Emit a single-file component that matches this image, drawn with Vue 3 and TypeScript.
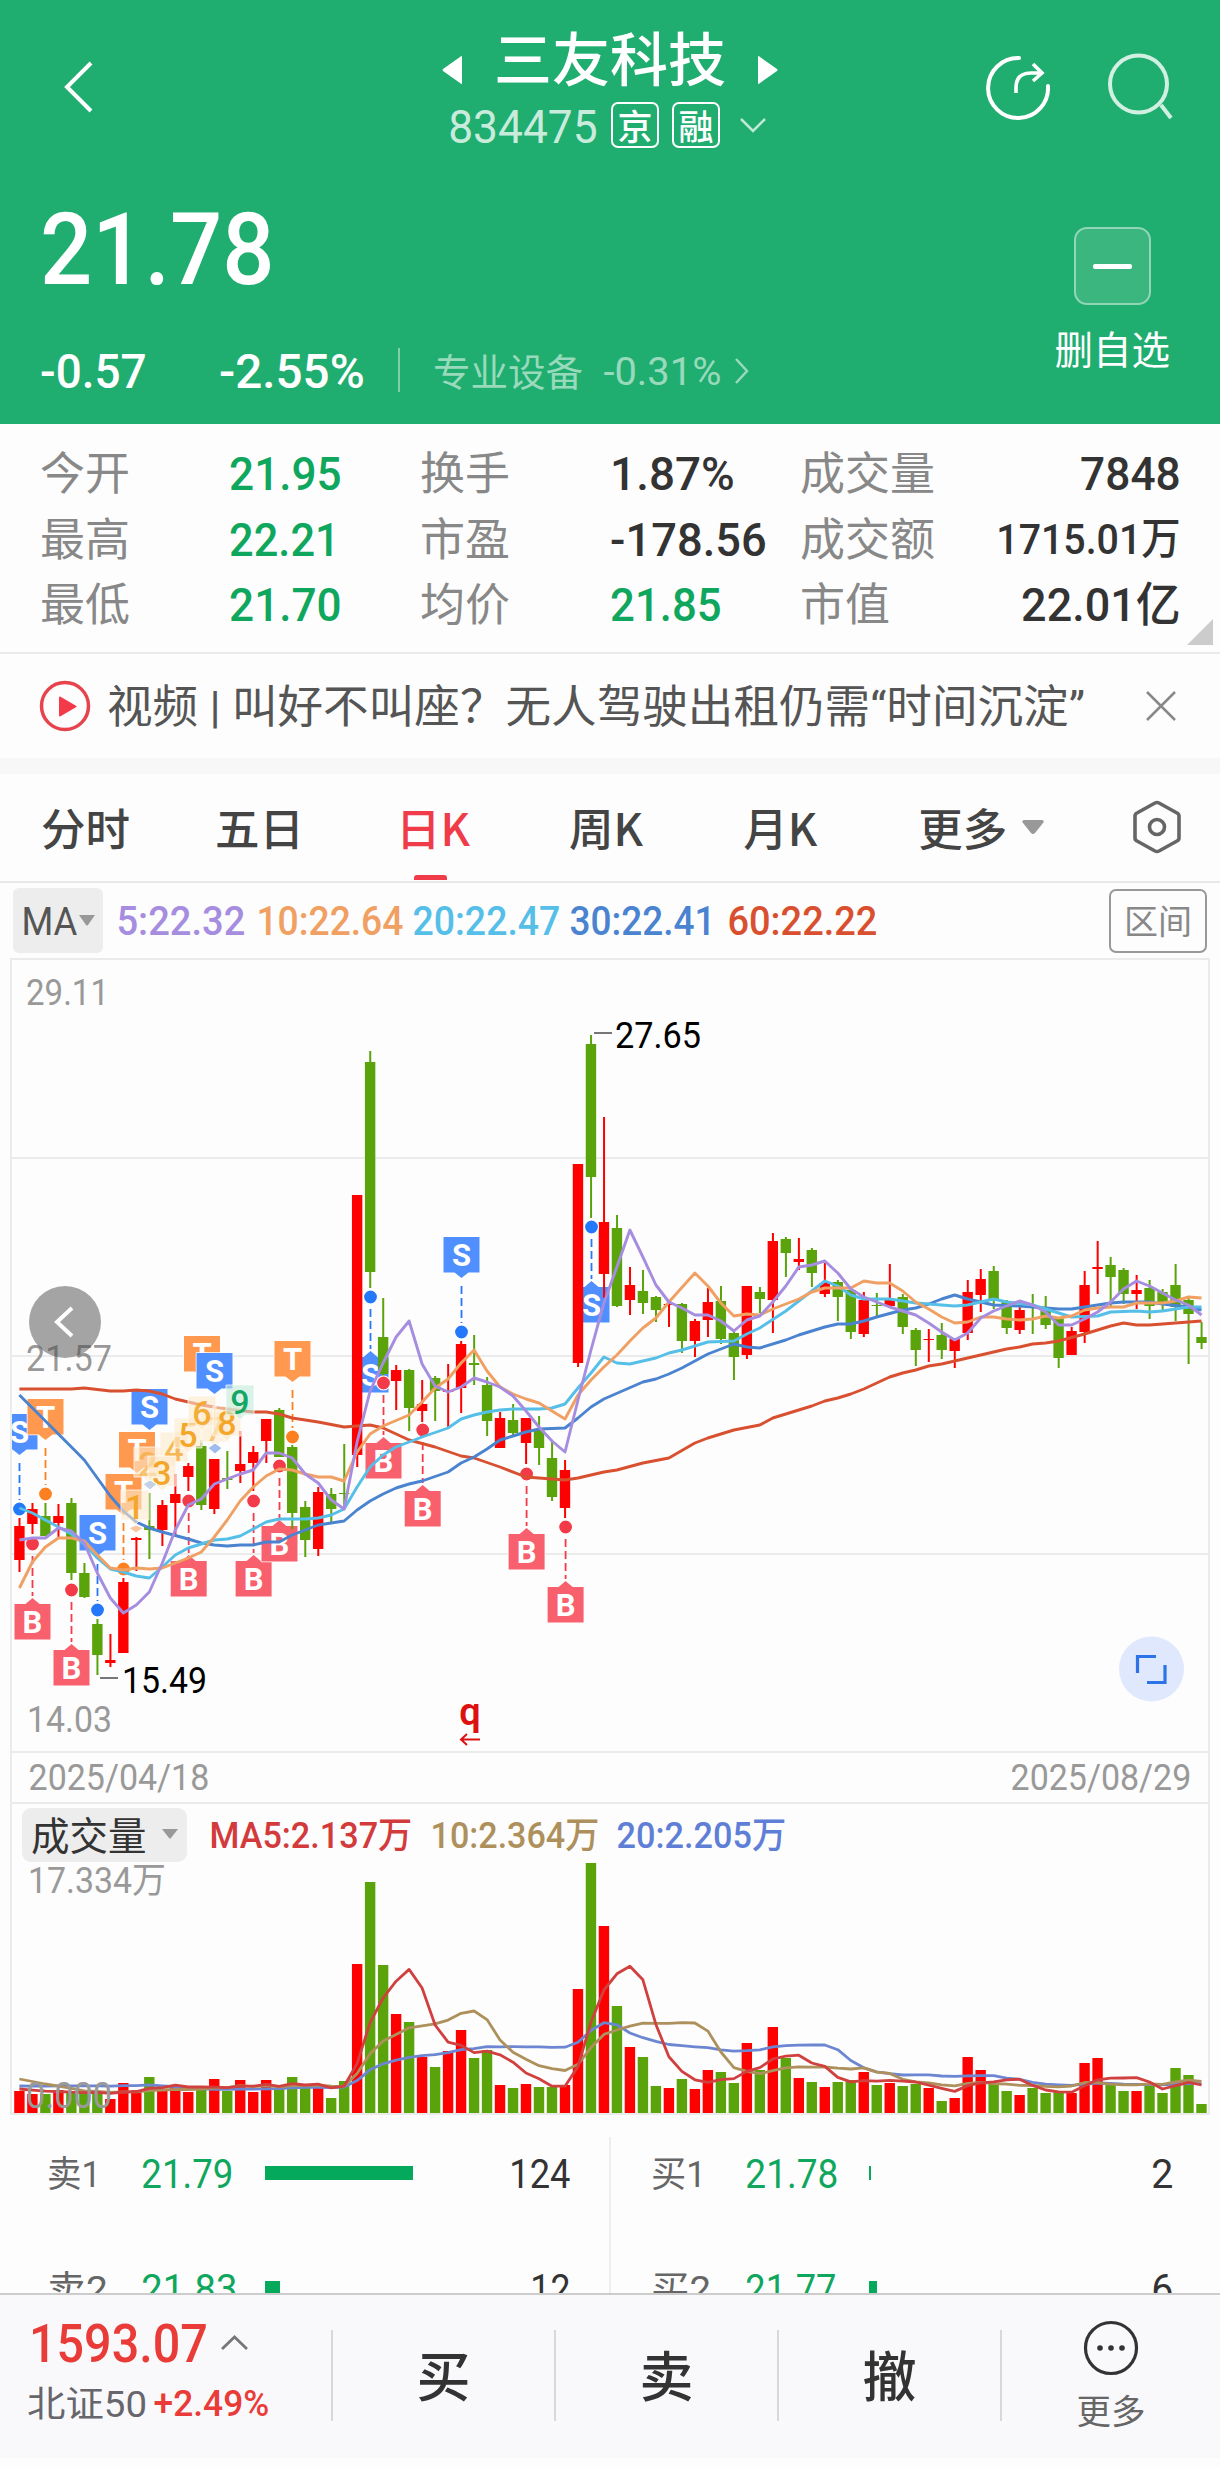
<script setup lang="ts">
import { h } from 'vue'

interface FitProps { t: string; w: number; cap: number; bold?: number }

// Figures drawn to a fixed width; the box is exactly cap height tall.
const Fit = (p: FitProps) => {
  const size = p.cap / 0.711
  return h('svg', { width: p.w, height: p.cap, style: { display: 'block', overflow: 'visible', flex: 'none' } }, [
    h('text', {
      x: -0.04 * size, y: p.cap, 'font-size': size, 'font-weight': p.bold ?? 500, fill: 'currentColor',
      textLength: p.w + 0.075 * size, lengthAdjust: 'spacingAndGlyphs',
    }, p.t),
  ])
}
Fit.props = ['t', 'w', 'cap', 'bold']

const stats = [
  ['今开', '21.95', 109, 'g', '换手', '1.87%', 121, '', '成交量', '7848', 97, 33.5],
  ['最高', '22.21', 107, 'g', '市盈', '-178.56', 153, '', '成交额', '1715.01万', 181, 30.5],
  ['最低', '21.70', 109, 'g', '均价', '21.85', 108, 'g', '市值', '22.01亿', 156, 33.5],
] as const

const maLegend = [
  { t: '5:22.32', w: 126, c: '#a68de0', m: 15 },
  { t: '10:22.64', w: 144, c: '#efa062', m: 14 },
  { t: '20:22.47', w: 145, c: '#55bfe8', m: 12 },
  { t: '30:22.41', w: 143, c: '#4a83d0', m: 12 },
  { t: '60:22.22', w: 147, c: '#d8502f', m: 15 },
]

const X = (i: number) => 19.4 + i * 12.99

// colour, high, body top, body bottom, low, volume top
const raw = `r 1518 1526 1560 1572 2091;r 1503 1509 1524 1534 2094;g 1503 1516 1536 1536 2094;r 1504 1516 1523 1537 2090;g 1498 1503 1573 1580 2092;g 1563 1573 1597 1598 2093;g 1619 1624 1655 1675 2093;r 1634 1660 1663 1667 2099;r 1578 1582 1653 1653 2083;r 1537 1538 1540 1571 2090;g 1493 1526 1530 1559 2077;r 1500 1505 1530 1546 2089;r 1474 1494 1503 1536 2087;r 1463 1466 1477 1491 2092;g 1440 1446 1505 1510 2089;r 1459 1459 1509 1514 2079;g 1451 1478 1480 1489 2091;r 1431 1464 1471 1483 2080;r 1446 1452 1463 1491 2092;r 1419 1419 1441 1463 2080;g 1408 1410 1457 1457 2089;g 1445 1447 1513 1529 2077;g 1501 1507 1540 1557 2087;r 1487 1492 1549 1556 2088;g 1488 1494 1509 1523 2098;g 1444 1493 1494 1508 2081;r 1195 1195 1455 1467 1964;g 1051 1062 1272 1288 1882;g 1298 1337 1374 1382 1965;r 1365 1370 1381 1410 2014;g 1369 1370 1408 1431 2022;r 1380 1404 1411 1422 2057;g 1376 1378 1391 1421 2067;r 1364 1390 1392 1429 2051;r 1341 1344 1388 1413 2030;g 1335 1363 1365 1385 2058;g 1377 1385 1421 1436 2050;r 1412 1418 1448 1448 2085;g 1404 1420 1433 1437 2088;r 1418 1418 1443 1464 2084;g 1416 1430 1448 1465 2087;g 1440 1458 1497 1501 2087;r 1460 1470 1508 1518 2085;r 1164 1164 1363 1367 1989;g 1035 1044 1177 1218 1863;r 1117 1222 1274 1298 1926;g 1215 1228 1306 1307 2006;r 1267 1285 1300 1315 2047;g 1270 1291 1303 1314 2057;g 1296 1297 1310 1322 2086;r 1303 1304 1305 1327 2088;g 1303 1304 1341 1353 2079;r 1319 1321 1341 1357 2089;r 1288 1302 1320 1337 2070;g 1286 1301 1339 1344 2072;g 1332 1333 1357 1380 2083;r 1286 1286 1355 1359 2043;g 1287 1292 1299 1313 2070;r 1233 1241 1300 1333 2027;g 1237 1239 1253 1277 2058;r 1238 1259 1262 1270 2078;g 1248 1250 1273 1287 2082;r 1263 1283 1294 1297 2087;g 1280 1282 1297 1321 2082;g 1287 1290 1332 1339 2080;r 1292 1300 1334 1337 2072;g 1293 1305 1306 1316 2085;r 1264 1300 1306 1306 2083;g 1294 1297 1327 1334 2086;g 1328 1330 1350 1366 2084;r 1329 1339 1340 1362 2088;g 1323 1335 1350 1359 2101;r 1338 1339 1351 1368 2098;r 1280 1292 1333 1340 2057;r 1269 1279 1295 1312 2070;g 1266 1271 1299 1309 2083;g 1300 1302 1328 1334 2091;r 1307 1310 1330 1334 2095;g 1294 1306 1307 1334 2088;g 1296 1311 1325 1329 2093;g 1317 1318 1358 1368 2092;r 1327 1331 1355 1355 2093;r 1271 1285 1332 1343 2063;r 1241 1267 1269 1294 2058;g 1257 1265 1277 1307 2085;g 1268 1270 1294 1304 2091;r 1275 1290 1294 1309 2091;g 1280 1288 1306 1319 2085;g 1289 1292 1302 1310 2093;g 1264 1285 1307 1321 2068;g 1297 1300 1314 1364 2075;g 1322 1337 1343 1349 2104`

const bars = raw.split(';').map((s, i) => {
  const [c, ...n] = s.trim().split(' ')
  const [hi, top, bot, lo, vol] = n.map(Number)
  return { x: X(i), c: c === 'r' ? '#ff0000' : '#5ba30b', hi, top, bot, lo, vol }
})

const toPoints = (s: string) => s.split(' ').map((p) => {
  const [i, y] = p.split(':').map(Number)
  return `${X(i).toFixed(1)},${y}`
}).join(' ')

const maLines = [
  { c: '#d8502f', p: toPoints('0:1389 4:1389 5:1388 7:1391 8:1391 9:1390 10:1391 11:1394 12:1399 13:1402 14:1405 16:1409 18:1412 19:1412 20:1414 21:1418 23:1422 25:1427 27:1425 28:1428 30:1440 32:1447 34:1456 35:1458 37:1467 39:1477 42:1480 43:1478 45:1472 46:1470 48:1463 50:1458 52:1443 53:1438 55:1430 57:1425 58:1418 59:1414 61:1406 62:1401 63:1398 64:1394 65:1389 67:1377 68:1373 69:1370 70:1366 71:1364 73:1358 76:1349 77:1347 78:1344 79:1343 80:1341 82:1334 84:1326 85:1323 86:1325 87:1325 90:1322 91:1321') },
  { c: '#4a83d0', p: toPoints('0:1395 4:1447 5:1460 7:1496 8:1511 9:1522 10:1528 11:1532 13:1539 14:1543 15:1545 16:1546 17:1545 18:1545 19:1542 20:1542 21:1535 22:1530 23:1525 24:1523 25:1521 26:1510 27:1501 28:1494 29:1488 30:1484 31:1481 33:1472 34:1463 35:1457 36:1449 37:1440 38:1436 39:1432 40:1429 42:1428 43:1418 44:1407 45:1399 48:1382 49:1379 50:1374 51:1368 52:1361 53:1354 55:1344 56:1347 57:1348 59:1340 60:1335 62:1327 63:1324 64:1324 65:1321 66:1317 68:1310 69:1308 70:1304 71:1299 72:1295 73:1299 75:1305 77:1306 78:1307 80:1309 81:1309 83:1305 84:1303 85:1302 87:1302 88:1304 90:1307 91:1310') },
  { c: '#55bfe8', p: toPoints('0:1508 1:1513 2:1520 3:1527 4:1534 5:1544 6:1558 7:1569 8:1572 9:1576 10:1578 11:1567 12:1555 13:1548 14:1544 15:1540 16:1539 17:1536 18:1529 19:1522 20:1519 22:1519 23:1518 24:1515 25:1509 26:1487 27:1467 28:1455 29:1447 30:1442 31:1437 33:1428 34:1419 35:1415 36:1412 37:1410 38:1409 40:1409 41:1408 42:1404 43:1388 44:1373 45:1357 46:1363 47:1364 49:1358 50:1353 51:1350 53:1342 55:1341 56:1334 57:1328 59:1311 61:1291 62:1281 63:1286 64:1295 65:1299 67:1299 69:1303 72:1306 73:1305 75:1299 76:1302 78:1305 79:1309 80:1313 81:1317 83:1316 84:1312 86:1311 87:1312 88:1311 89:1309 90:1307 91:1307') },
  { c: '#efa062', p: toPoints('0:1588 1:1562 2:1547 3:1538 4:1538 5:1541 6:1555 7:1568 8:1570 9:1568 10:1569 11:1568 12:1563 13:1558 14:1552 15:1537 16:1520 17:1501 18:1487 19:1476 20:1469 21:1470 22:1474 23:1477 24:1477 25:1481 26:1452 27:1434 28:1426 30:1415 31:1402 32:1388 33:1379 34:1363 35:1350 36:1371 37:1387 38:1394 39:1399 40:1403 41:1411 42:1419 43:1395 44:1380 45:1367 46:1355 47:1341 48:1328 49:1318 50:1302 52:1273 53:1286 54:1303 55:1316 56:1314 57:1315 58:1309 60:1299 61:1292 62:1288 64:1288 65:1281 66:1283 67:1283 68:1291 69:1302 70:1309 71:1317 72:1323 73:1322 74:1317 75:1317 76:1319 77:1320 78:1319 79:1316 80:1318 81:1316 82:1310 83:1308 84:1307 85:1307 86:1303 88:1303 89:1301 90:1297 91:1298') },
  { c: '#a68de0', p: toPoints('0:1540 1:1538 2:1538 3:1528 4:1531 5:1543 6:1573 7:1598 8:1613 9:1605 10:1592 11:1563 12:1530 13:1505 14:1499 15:1484 16:1479 17:1474 18:1470 19:1453 20:1453 21:1458 22:1474 23:1483 24:1500 25:1509 26:1442 27:1391 28:1363 29:1337 30:1321 31:1364 32:1386 33:1392 34:1387 35:1378 36:1382 37:1387 38:1396 39:1411 40:1427 41:1441 42:1452 43:1400 44:1350 45:1303 46:1267 47:1230 48:1257 49:1285 50:1302 51:1308 52:1315 53:1315 54:1321 55:1331 56:1320 57:1316 58:1302 59:1286 60:1267 61:1265 62:1261 63:1273 64:1289 65:1297 66:1302 67:1307 69:1315 70:1323 71:1332 72:1340 73:1333 74:1318 75:1311 76:1306 77:1301 78:1305 79:1312 80:1325 81:1325 82:1319 83:1312 84:1302 85:1289 86:1281 87:1286 88:1293 89:1300 90:1305 91:1315') },
]

// Volumes that precede the visible window, oldest first.
const before = [...Array(10).fill(20), ...Array(5).fill(44), ...Array(4).fill(24.5)] as number[]
const volumes = [...before, ...bars.map((b) => 2113 - b.vol)]
const average = (n: number) => bars.map((b, i) => {
  const end = i + before.length + 1
  const sum = volumes.slice(end - n, end).reduce((a, v) => a + v, 0)
  return `${b.x.toFixed(1)},${(2113 - sum / n).toFixed(1)}`
}).join(' ')
const volLines = [
  { c: '#6c86d2', p: average(20) },
  { c: '#ad905c', p: average(10) },
  { c: '#d0403f', p: average(5) },
]

interface Signal { k: 'S' | 'T' | 'B'; x: number; y: number; dot?: number; up?: boolean }
const signals: Signal[] = [
  { k: 'S', x: 19.5, y: 1414, dot: 1509 },
  { k: 'T', x: 45.5, y: 1399, dot: 1494 },
  { k: 'T', x: 137, y: 1432 },
  { k: 'T', x: 123.5, y: 1474, dot: 1569 },
  { k: 'S', x: 149.5, y: 1389 },
  { k: 'S', x: 97.5, y: 1515, dot: 1610 },
  { k: 'T', x: 202, y: 1336 },
  { k: 'S', x: 214.5, y: 1353 },
  { k: 'T', x: 292.5, y: 1341, dot: 1437 },
  { k: 'S', x: 370.5, y: 1357, dot: 1297, up: true },
  { k: 'S', x: 461.5, y: 1237, dot: 1332 },
  { k: 'S', x: 591.5, y: 1287, dot: 1227, up: true },
  { k: 'B', x: 32.5, y: 1604, dot: 1544, up: true },
  { k: 'B', x: 71.5, y: 1650, dot: 1590, up: true },
  { k: 'B', x: 188.7, y: 1561, dot: 1501, up: true },
  { k: 'B', x: 253.6, y: 1561, dot: 1501, up: true },
  { k: 'B', x: 279.5, y: 1526, dot: 1466, up: true },
  { k: 'B', x: 383.5, y: 1443, dot: 1383, up: true },
  { k: 'B', x: 422.7, y: 1491, dot: 1430, up: true },
  { k: 'B', x: 526.6, y: 1534, dot: 1474, up: true },
  { k: 'B', x: 565.6, y: 1587, dot: 1527, up: true },
]
const boxColor = { S: '#508fff', T: '#ff994f', B: '#f7606c' }
const dotColor = { S: '#2478fa', T: '#fd8020', B: '#f33a48' }
const boxPath = (s: Signal) => s.up
  ? `M${s.x - 18} ${s.y}H${s.x - 7}L${s.x} ${s.y - 6}L${s.x + 7} ${s.y}H${s.x + 18}V${s.y + 35.5}H${s.x - 18}Z`
  : `M${s.x - 18} ${s.y}H${s.x + 18}V${s.y + 35.5}H${s.x + 7}L${s.x} ${s.y + 41}L${s.x - 7} ${s.y + 35.5}H${s.x - 18}Z`

const counts = [
  { n: '1', x: 135, y: 1508, o: 1 }, { n: '2', x: 148, y: 1465, o: 0.6 }, { n: '4', x: 174, y: 1450, o: 0.75 },
  { n: '3', x: 162, y: 1474, o: 1 }, { n: '5', x: 188, y: 1436, o: 1 }, { n: '7', x: 215, y: 1430, o: 0.55 },
  { n: '6', x: 202, y: 1414, o: 0.9 }, { n: '8', x: 227, y: 1424, o: 1 }, { n: '9', x: 240, y: 1403, o: 1 },
]

const book = [
  [{ n: '卖1', nw: 51, p: '21.79', pw: 89, bar: 148, q: '124', qw: 58 }, { n: '买1', nw: 52, p: '21.78', pw: 90, bar: 2, q: '2', qw: 19 }],
  [{ n: '卖2', nw: 58, p: '21.83', pw: 93, bar: 15, q: '12', qw: 37 }, { n: '买2', nw: 57, p: '21.77', pw: 88, bar: 8, q: '6', qw: 19 }],
]
</script>

<template>
  <div class="app">
    <header class="head">
      <div class="nav">
        <svg class="back" width="30" height="54" viewBox="0 0 30 54"><path d="M27 3 3 27l24 24" fill="none" stroke="#fff" stroke-width="4" /></svg>
        <div class="title">
          <div class="name">
            <svg width="20" height="28"><path d="M20 1v26q0 2-2 0L1 15q-1-1 0-2L18 1q2-2 2 0z" fill="#fff" /></svg>
            <span>三友科技</span>
            <svg width="20" height="28"><path d="M0 1v26q0 2 2 0L19 15q1-1 0-2L2 1Q0-1 0 1z" fill="#fff" /></svg>
          </div>
          <div class="code">
            <Fit t="834475" :w="146" :cap="33" :bold="400" class="dim" />
            <i>京</i><i>融</i>
            <svg class="down" width="26" height="16"><path d="m1 2 12 12L25 2" fill="none" stroke="#bfe8d5" stroke-width="2.5" /></svg>
          </div>
        </div>
        <svg class="share" width="68" height="68" viewBox="984 54 68 68" fill="none" stroke="#fff" stroke-width="4">
          <path d="M1019 58A30 30 0 1 0 1048 86" stroke-linecap="round" />
          <path d="M1016 93V88Q1016 73 1031 73H1042M1033 64l9 9-9 8" stroke-width="3.6" />
        </svg>
        <svg class="search" width="68" height="68" viewBox="1106 52 68 68" fill="none" stroke="#d2f0e2" stroke-width="4">
          <circle cx="1138.500" cy="84" r="28.500" /><path d="m1161 105 10 13" />
        </svg>
      </div>
      <div class="quote">
        <div>
          <Fit t="21.78" :w="227" :cap="71" />
          <div class="change">
            <Fit t="-0.57" :w="103" :cap="34" />
            <Fit t="-2.55%" :w="142" :cap="34" style="margin-left: 76px" />
            <b class="sep" />
            <span class="sector">专业设备</span>
            <Fit t="-0.31%" :w="115" :cap="27.500" :bold="400" class="soft" />
            <svg class="soft go" width="14" height="26"><path d="m2 1 11 12L2 25" fill="none" stroke="currentColor" stroke-width="2.5" /></svg>
          </div>
        </div>
        <div class="remove">
          <div class="minus"><b /></div>
          <span>删自选</span>
        </div>
      </div>
    </header>

    <section class="stats">
      <div v-for="r in stats" :key="r[0]" class="stat">
        <span>{{ r[0] }}</span><Fit :t="r[1]" :w="r[2]" :cap="33.500" :class="r[3]" />
        <span>{{ r[4] }}</span><Fit :t="r[5]" :w="r[6]" :cap="33.500" :class="r[7]" />
        <span>{{ r[8] }}</span><Fit :t="r[9]" :w="r[10]" :cap="r[11]" class="end" />
      </div>
      <svg class="fold" width="26" height="26"><path d="M26 0v26H0z" fill="#ccc" /></svg>
    </section>

    <section class="news">
      <svg width="52" height="52" viewBox="0 0 52 52"><circle cx="26" cy="26" r="23.500" fill="none" stroke="#e7434d" stroke-width="3.500" /><path d="M21 17.500v18L36.500 26.500z" fill="#f33a48" stroke="#f33a48" stroke-width="2" stroke-linejoin="round" /></svg>
      <svg class="headline" width="974" height="46"><text x="-2" y="40" textLength="978" lengthAdjust="spacingAndGlyphs">视频 | 叫好不叫座？无人驾驶出租仍需“时间沉淀”</text></svg>
      <svg class="close" width="30" height="30"><path d="m1 1 28 28M29 1 1 29" stroke="#888" stroke-width="2.500" /></svg>
    </section>

    <nav class="tabs">
      <span style="margin-left: 41px">分时</span>
      <span style="margin-left: 85px">五日</span>
      <span class="on" style="margin-left: 92px">日K</span>
      <span style="margin-left: 99px">周K</span>
      <span style="margin-left: 100px">月K</span>
      <span style="margin-left: 101px">更多</span>
      <svg style="margin-left: 15px" width="22" height="14"><path d="M2 0h18q3 1 1 3L13 13q-2 2-4 0L1 3Q-1 1 2 0z" fill="#999" /></svg>
      <svg style="margin-left: 88px" width="50" height="54" viewBox="-25 -27 50 54" fill="none" stroke="#666" stroke-width="3.600"><path d="M-2-24q2-1 4 0L20-14q2 1 2 3V11q0 2-2 3L2 24q-2 1-4 0L-20 14q-2-1-2-3V-11q0-2 2-3z" /><circle r="7.500" /></svg>
    </nav>

    <div class="legend">
      <div class="chip">
        <Fit t="MA" :w="53" :cap="28" :bold="400" />
        <svg width="16" height="11"><path d="M0 0h16L9 10q-1 1-2 0z" fill="#999" /></svg>
      </div>
      <Fit v-for="m in maLegend" :key="m.t" :t="m.t" :w="m.w" :cap="28.500" :style="{ color: m.c, marginLeft: m.m + 'px' }" />
      <div class="range">区间</div>
    </div>

    <div class="frame">
      <svg class="plot" width="1196" height="791" viewBox="12 960 1196 791">
        <g stroke="#ebebeb" stroke-width="2"><path d="M11 1158H1210M11 1356H1210M11 1554H1210" /></g>
        <g v-for="(s, i) in signals" :key="'b' + i">
          <path v-if="s.dot" :d="s.up ? `M${s.x} ${s.dot + 12}V${s.y - 8}` : `M${s.x} ${s.y + 49}V${s.dot - 9}`" :stroke="dotColor[s.k]" stroke-width="1.800" stroke-dasharray="8 4" />
          <path :d="boxPath(s)" :fill="boxColor[s.k]" stroke="#fff" stroke-width="1.500" paint-order="stroke" stroke-linejoin="round" />
          <text :x="s.x" :y="s.y + 29" class="mark">{{ s.k }}</text>
        </g>
        <g v-for="(b, i) in bars" :key="i" :fill="b.c">
          <rect :x="b.x - 0.900" :y="b.hi" width="2" :height="b.lo - b.hi" />
          <rect :x="b.x - 5.200" :y="b.top" width="10.400" :height="b.bot - b.top" />
        </g>
        <template v-for="(s, i) in signals" :key="'d' + i">
          <circle v-if="s.dot" :cx="s.x" :cy="s.dot" r="7" :fill="dotColor[s.k]" stroke="#fff" stroke-width="1.200" />
        </template>
        <polyline v-for="m in maLines" :key="m.c" :points="m.p" :stroke="m.c" fill="none" stroke-width="2.900" stroke-linejoin="round" />
        <g v-for="c in counts" :key="c.n">
          <path :d="`M${c.x - 14} ${c.y - 18}h28v30h-9l-5 5-5-5h-9z`" :fill="c.n === '9' ? '#c4ebdb' : '#fdeacb'" fill-opacity=".6" stroke="#fff" stroke-opacity=".7" />
          <text :x="c.x" :y="c.y + 11" class="count" :fill="c.n === '9' ? '#14a764' : '#f3a628'" :opacity="c.o">{{ c.n }}</text>
        </g>
        <g fill="#fff" stroke="#fff"><path d="M129 1528l7 5 7-5-7-3z" fill="#f9c6a0" /><path d="M143 1484l7 6 7-6-7-4z" fill="#c5d2e6" /><path d="M208 1448l7 6 7-6-7-5z" fill="#9fbdec" /></g>
        <g fill="#999" font-size="36.500">
          <text x="26" y="1005" textLength="83" lengthAdjust="spacingAndGlyphs">29.11</text>
          <text x="27" y="1732" textLength="85" lengthAdjust="spacingAndGlyphs">14.03</text>
          <circle cx="65" cy="1322" r="36" fill="#a4a4a4" />
          <text x="26" y="1371" textLength="86" lengthAdjust="spacingAndGlyphs" fill="#4a4a4a" fill-opacity=".58">21.57</text>
        </g>
        <path d="m72 1308-15 14 15 14" fill="none" stroke="#fff" stroke-width="4" />
        <path d="M594 1033h18M100 1678h18" stroke="#777" stroke-width="2" />
        <g fill="#000" font-size="36.500">
          <text x="615" y="1048" textLength="86" lengthAdjust="spacingAndGlyphs">27.65</text>
          <text x="122" y="1693" textLength="85" lengthAdjust="spacingAndGlyphs">15.49</text>
        </g>
        <text x="470" y="1725" class="event">q</text>
        <path d="M480 1739.500H461M467 1734l-6 5.500 6 5.500" fill="none" stroke="#dd1111" stroke-width="2" />
        <circle cx="1151.500" cy="1669" r="32.500" fill="#dfe8fc" />
        <path d="M1137.500 1673V1656.500H1156M1165 1665V1682.500H1147" fill="none" stroke="#2c73e8" stroke-width="3.200" />
      </svg>
      <div class="dates">
        <Fit t="2025/04/18" :w="178" :cap="26" :bold="400" />
        <Fit t="2025/08/29" :w="178" :cap="26" :bold="400" />
      </div>
      <div class="vol-legend">
        <div class="vol-chip">成交量<svg width="16" height="10"><path d="M0 0h16L9 9q-1 1-2 0z" fill="#999" /></svg></div>
        <Fit t="MA5:2.137万" :w="200" :cap="26" style="color: #d33a3c; margin-left: 24px" />
        <Fit t="10:2.364万" :w="166" :cap="26" style="color: #ad905c; margin-left: 21px" />
        <Fit t="20:2.205万" :w="167" :cap="26" style="color: #5f7fd6; margin-left: 20px" />
      </div>
      <svg class="plot" width="1196" height="250" viewBox="12 1863 1196 250">
        <rect v-for="(b, i) in bars" :key="i" :x="b.x - 5.200" :y="b.vol" width="10.400" :height="2113 - b.vol" :fill="b.c" />
        <polyline v-for="m in volLines" :key="m.c" :points="m.p" :stroke="m.c" fill="none" stroke-width="2.800" stroke-linejoin="round" />
        <g fill="#999" font-size="36.500">
          <text x="28" y="1893" textLength="138" lengthAdjust="spacingAndGlyphs">17.334万</text>
          <text x="26" y="2108" textLength="86" lengthAdjust="spacingAndGlyphs">0.000</text>
        </g>
      </svg>
    </div>

    <section class="book">
      <div v-for="(row, i) in book" :key="i" class="level">
        <div v-for="o in row" :key="o.n" class="order">
          <svg class="side" width="95" height="36"><text x="-1" y="32" :textLength="o.nw + 3" lengthAdjust="spacingAndGlyphs">{{ o.n }}</text></svg>
          <div class="price"><Fit :t="o.p" :w="o.pw" :cap="29.500" :bold="400" /></div>
          <b :style="{ width: o.bar + 'px' }" />
          <Fit :t="o.q" :w="o.qw" :cap="29.500" :bold="400" class="end" />
        </div>
      </div>
    </section>

    <footer class="bar">
      <div class="index">
        <div class="point"><Fit t="1593.07" :w="175" :cap="37.500" /><svg width="27" height="16"><path d="m1 14 12.500-12L26 14" fill="none" stroke="#777" stroke-width="2.800" /></svg></div>
        <div class="sub">
          <svg width="118" height="36"><text x="-1" y="32" textLength="120" lengthAdjust="spacingAndGlyphs">北证50</text></svg>
          <Fit t="+2.49%" :w="113" :cap="26" />
        </div>
      </div>
      <div class="act">买</div>
      <div class="act">卖</div>
      <div class="act">撤</div>
      <div class="more">
        <svg width="56" height="56" viewBox="-28 -28 56 56"><circle r="25.500" fill="none" stroke="#333" stroke-width="3.200" /><g fill="#333"><circle cx="-11" r="2.800" /><circle r="2.800" /><circle cx="11" r="2.800" /></g></svg>
        <span>更多</span>
      </div>
    </footer>
  </div>
</template>

<style>
body { margin: 0; background: #fff; }
</style>

<style scoped>
.app { width: 1220px; height: 2468px; overflow: hidden; background: #fdfdfd; color: #333; font-family: Roboto, "Noto Sans CJK SC", sans-serif; }
.app svg { flex: none; display: block; overflow: visible; }
.app svg.plot { overflow: hidden; }
.app :deep(text) { font-family: Roboto, "Noto Sans CJK SC", sans-serif; }
.app span, .act, .range, i, .vol-chip { white-space: nowrap; line-height: 1; font-family: "Noto Sans CJK SC", sans-serif; }

.head { height: 424px; background: #20ad70; color: #fff; }
.nav { display: flex; height: 213px; align-items: flex-start; }
.back { margin: 60px 0 0 64px; }
.title { width: 336px; margin: 27px 0 0 348px; }
.name { display: flex; justify-content: space-between; align-items: center; height: 58px; font-size: 58px; font-weight: 500; }
.name svg { margin-top: 28px; }
.code { display: flex; align-items: center; height: 46px; margin: 17px 0 0 8px; }
.dim { color: #c8ebdc; margin-top: 2px; }
.code i { box-sizing: border-box; width: 48px; height: 46px; border: 2px solid #fff; border-radius: 7px; margin-left: 13px; font: 500 35px/41px "Noto Sans CJK SC", sans-serif; text-align: center; }
.code i:first-of-type { margin-left: 15px; }
.down { margin-left: 20px; }
.share { margin: 54px 0 0 206px; }
.search { margin: 52px 0 0 54px; }
.quote { display: flex; justify-content: space-between; padding: 0 50px 0 44px; }
.change { display: flex; align-items: center; height: 45px; margin: 63px 0 0 -2px; }
.change svg { margin-top: 2px; }
.sep { width: 2px; height: 44px; background: #7fcfa9; margin: 0 33px 0 35px; }
.sector { font-size: 37.5px; color: #98dabb; margin-right: 22px; }
.soft { color: #98dabb; }
.go { margin-left: 14px; }
.remove { display: flex; flex-direction: column; align-items: center; margin-top: 14px; font-size: 38.5px; }
.remove span { margin-top: 23px; }
.minus { box-sizing: border-box; width: 77px; height: 78px; border: 2px solid #90d6b7; border-radius: 13px; background: #3bb67f; display: flex; align-items: center; justify-content: center; }
.minus b { width: 39px; height: 5px; border-radius: 2px; background: #fff; }

.stats { position: relative; box-sizing: border-box; height: 230px; padding: 16px 41px 0; border-bottom: 2px solid #ebebeb; }
.stat { display: grid; grid-template-columns: 190px 190px 191px 189px 134px 244px; align-items: center; height: 65.5px; }
.stat span { font-size: 45px; color: #888; margin: -4px 0 0 -1px; }
.stat .g { color: #0fa65d; }
.end { justify-self: end; margin-left: auto; }
.fold { position: absolute; right: 7px; bottom: 7px; }

.news { display: flex; align-items: center; height: 104px; padding: 0 44px 0 39px; border-bottom: 16px solid #f7f7f7; }
.headline { margin-left: 18px; }
.news .headline text { font-size: 45px; fill: #555; }
.close { margin-left: auto; }

.tabs { display: flex; align-items: center; box-sizing: border-box; height: 109px; padding-bottom: 1px; border-bottom: 2px solid #e8e8e8; font-size: 44.500px; font-weight: 500; color: #444; }
.on { position: relative; color: #f03b48; }
.on::after { content: ""; position: absolute; left: 18px; bottom: -31px; width: 33px; height: 5px; border-radius: 3px 3px 0 0; background: #f03b48; }

.legend { display: flex; align-items: center; box-sizing: border-box; height: 75px; padding: 0 13px; }
.chip { display: flex; align-items: center; gap: 3px; box-sizing: border-box; width: 90px; height: 65px; padding-left: 10px; border-radius: 6px; background: #ededed; color: #555; }
.range { box-sizing: border-box; margin-left: auto; width: 98px; height: 64px; border: 2px solid #999; border-radius: 7px; color: #888; font-size: 34px; line-height: 58px; text-align: center; }

.frame { box-sizing: border-box; width: 1200px; margin-left: 10px; border: 2px solid #ebebeb; }
.mark { font-size: 31px; font-weight: 700; fill: #fff; text-anchor: middle; }
.count { font-size: 34px; font-weight: 500; text-anchor: middle; }
.event { font-size: 38px; font-weight: 600; fill: #dd1111; text-anchor: middle; }
.dates { display: flex; justify-content: space-between; align-items: center; box-sizing: border-box; height: 53px; padding: 0 18px 2px 18px; border: solid #ebebeb; border-width: 2px 0; color: #999; }
.vol-legend { display: flex; align-items: center; height: 59px; }
.vol-legend > * { margin-top: 3px; }
.vol-chip { display: flex; align-items: center; gap: 15px; box-sizing: border-box; width: 165px; height: 54px; margin-left: 10px; padding-left: 9px; border-radius: 9px; background: #ededed; font-size: 38.500px; padding-bottom: 3px; }

.book { box-sizing: border-box; height: 178px; padding-top: 22px; overflow: hidden; background: linear-gradient(#eee, #eee) 609px 22px / 2px 200px no-repeat; }
.level { display: flex; height: 115px; }
.order { display: flex; align-items: center; box-sizing: border-box; width: 610px; height: 72px; padding: 0 41px 0 48px; }
.order + .order { padding: 0 48px 0 42px; }
.side text { font-size: 36px; fill: #666; }
.price { width: 121.5px; color: #0fa65d; }
.order b { height: 14px; background: #04a95c; }

.bar { display: flex; box-sizing: border-box; height: 165px; border-top: 2px solid #ccc; background: #f9f9fb; }
.index { width: 331px; box-sizing: border-box; padding: 29px 0 0 28px; color: #e93c39; }
.point { display: flex; align-items: center; gap: 15px; margin-left: 3px; }
.sub { display: flex; align-items: center; gap: 9px; margin-top: 23px; }
.sub svg:first-child text { font-size: 36px; fill: #66666c; }
.act { width: 223px; box-sizing: border-box; height: 91px; margin-top: 35px; border-left: 2px solid #d8d8dc; text-align: center; font-size: 54px; line-height: 87px; font-weight: 500; }
.more { flex: 1; height: 91px; margin-top: 35px; border-left: 2px solid #d8d8dc; display: flex; flex-direction: column; align-items: center; }
.more svg { margin-top: -10px; }
.more span { font-size: 34.5px; margin-top: 16px; color: #666; }
</style>
